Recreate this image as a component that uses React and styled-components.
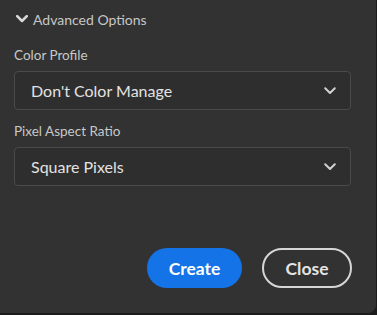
import React from "react"
import styled, { createGlobalStyle } from "styled-components"

const GlobalStyle = createGlobalStyle`
   html, body {
      margin: 0;
      padding: 0;
      background-color: #1c1c1c;
   }
   body {
      font-family: Lato, "Open Sans", sans-serif;
   }
`

function Chevron({ size = 12, stroke = 2.4 }) {
   return (
      <svg width={size} height={size * 0.6} viewBox="0 0 12 7.2" fill="none">
         <path
            d="M1.2 1.2 L6 6 L10.8 1.2"
            stroke="currentColor"
            strokeWidth={stroke}
            strokeLinecap="round"
            strokeLinejoin="round"
         />
      </svg>
   )
}

function Dropdown({ value }) {
   return (
      <Select>
         <span>{value}</span>
         <Chevron size={12} stroke={2} />
      </Select>
   )
}

function App() {
   return (
      <>
         <GlobalStyle />
         <Panel>
            <Toggle>
               <Chevron size={12} stroke={2.6} />
               <span>Advanced Options</span>
            </Toggle>
            <Field>
               <Label>Color Profile</Label>
               <Dropdown value="Don't Color Manage" />
            </Field>
            <Field>
               <Label>Pixel Aspect Ratio</Label>
               <Dropdown value="Square Pixels" />
            </Field>
            <Actions>
               <Button primary>Create</Button>
               <Button>Close</Button>
            </Actions>
         </Panel>
      </>
   )
}

const Panel = styled.div`
   box-sizing: border-box;
   width: 376px;
   height: 313px;
   background-color: #323232;
   border-bottom-right-radius: 8px;
   padding: 9px 25px 0 14px;
   display: flex;
   flex-direction: column;
`

const Toggle = styled.div`
   display: flex;
   align-items: center;
   gap: 5px;
   padding-left: 2px;
   height: 20px;
   color: #c6c6c6;
   font-size: 14px;
   svg {
      color: #d8d8d8;
   }
`

const Field = styled.div`
   display: flex;
   flex-direction: column;
   margin-top: 16px;
   &:nth-of-type(3) {
      margin-top: 11px;
   }
`

const Label = styled.div`
   color: #c8c8c8;
   font-size: 13.5px;
   height: 20px;
   line-height: 20px;
   margin-bottom: 6px;
`

const Select = styled.div`
   box-sizing: border-box;
   height: 39px;
   border: 1px solid #4a4a4a;
   border-radius: 4px;
   background-color: #2e2e2e;
   display: flex;
   align-items: center;
   justify-content: space-between;
   padding: 0 14px 0 16px;
   color: #e2e2e2;
   font-size: 16px;
   svg {
      color: #d0d0d0;
   }
`

const Actions = styled.div`
   display: flex;
   justify-content: flex-end;
   gap: 20px;
   margin-top: 62px;
   margin-right: -1px;
`

const Button = styled.button`
   box-sizing: border-box;
   height: 40px;
   width: ${(p) => (p.primary ? "95px" : "90px")};
   border-radius: 20px;
   font-family: Lato, "Open Sans", sans-serif;
   font-weight: 700;
   font-size: 17.5px;
   cursor: pointer;
   background-color: ${(p) => (p.primary ? "#1473e6" : "transparent")};
   color: ${(p) => (p.primary ? "#ffffff" : "#e4e4e4")};
   border: ${(p) => (p.primary ? "none" : "2px solid #d6d6d6")};
`

export default App
